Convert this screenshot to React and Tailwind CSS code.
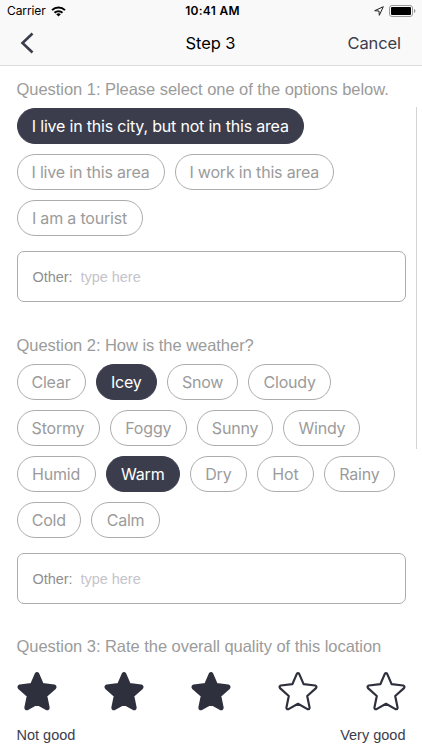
// App.jsx

import React, { useState } from 'react';

const locationOptions = [
  { label: 'I live in this city, but not in this area', width: 'w-[287.5px]' },
  { label: 'I live in this area', width: 'w-[148px]' },
  { label: 'I work in this area', width: 'w-[159px]' },
  { label: 'I am a tourist', width: 'w-[126px]' },
];

const weatherOptions = [
  { label: 'Clear', width: 'w-[69px]' },
  { label: 'Icey', width: 'w-[61px]' },
  { label: 'Snow', width: 'w-[71px]' },
  { label: 'Cloudy', width: 'w-[82.5px]' },
  { label: 'Stormy', width: 'w-[83px]' },
  { label: 'Foggy', width: 'w-[77px]' },
  { label: 'Sunny', width: 'w-[76px]' },
  { label: 'Windy', width: 'w-[77px]' },
  { label: 'Humid', width: 'w-[79px]' },
  { label: 'Warm', width: 'w-[74px]' },
  { label: 'Dry', width: 'w-[56.5px]' },
  { label: 'Hot', width: 'w-[57px]' },
  { label: 'Rainy', width: 'w-[70.5px]' },
  { label: 'Cold', width: 'w-[64.5px]' },
  { label: 'Calm', width: 'w-[68.5px]' },
];

const StatusBar = () => (
  <div className="flex h-[22px] items-center justify-between pl-[7px] pr-[6px] text-black">
    <div className="flex w-[120px] items-center gap-[5px]">
      <span className="text-[12px] tracking-[-0.1px]">Carrier</span>
      <svg width="15" height="11" viewBox="0 0 15 11" fill="none" stroke="currentColor" strokeWidth="2">
        <path d="M1 4.1a9.4 9.4 0 0 1 13 0" />
        <path d="M3.5 6.8a5.8 5.8 0 0 1 8 0" />
        <path d="M7.5 10.6 5.2 8.3a3.4 3.4 0 0 1 4.6 0z" fill="currentColor" stroke="none" />
      </svg>
    </div>
    <span className="pl-[2px] text-[12px] font-semibold tracking-[0.3px]">10:41 AM</span>
    <div className="flex w-[120px] items-center justify-end gap-[5px]">
      <svg width="10" height="10" viewBox="0 0 10 10" fill="none" stroke="#222" strokeWidth="1">
        <path d="M9.3.7.7 4.7l4.3.3.3 4.3z" strokeLinejoin="round" />
      </svg>
      <svg width="27" height="12" viewBox="0 0 27 12">
        <rect x=".5" y=".5" width="23" height="11" rx="2.5" fill="none" stroke="#999" />
        <rect x="2" y="2" width="20" height="8" rx="1" fill="#000" />
        <path d="M25 4v4c.9-.3 1.4-1 1.4-2s-.5-1.7-1.4-2z" fill="#999" />
      </svg>
    </div>
  </div>
);

const Pill = ({ label, width, selected, onClick }) => (
  <button
    type="button"
    onClick={onClick}
    className={`${width} h-9 shrink-0 whitespace-nowrap rounded-full border text-center text-[16px] tracking-[-0.19px] ${
      selected ? 'border-[#3b3d4c] bg-[#3b3d4c] text-white' : 'border-[#acacac] text-[#9b9b9b]'
    }`}
  >
    {label}
  </button>
);

const PillGroup = ({ options, initial }) => {
  const [selected, setSelected] = useState(initial);

  const toggle = (label) => {
    setSelected(selected.includes(label) ? selected.filter((l) => l !== label) : [...selected, label]);
  };

  return (
    <div className="flex flex-wrap gap-x-[10.3px] gap-y-[10px]">
      {options.map((option) => (
        <Pill
          key={option.label}
          {...option}
          selected={selected.includes(option.label)}
          onClick={() => toggle(option.label)}
        />
      ))}
    </div>
  );
};

const Question = ({ children }) => (
  <h2 className="h-6 whitespace-nowrap font-['Liberation_Sans',sans-serif] text-[16.5px] leading-6 tracking-[-0.04px] text-[#9b9b9b]">
    {children}
  </h2>
);

const OtherInput = () => (
  <label className="mt-[15px] flex h-[51px] items-center rounded-[7px] border border-[#acacac] px-[15px] font-['Liberation_Sans',sans-serif] text-[14.5px] tracking-[-0.04px] text-[#8f8f8f]">
    <span className="pt-[3px]">Other:</span>
    <input
      type="text"
      placeholder="type here"
      className="ml-2 min-w-0 flex-1 pt-[3px] outline-none placeholder:text-[#c4c4ca]"
    />
  </label>
);

const Star = ({ filled, onClick }) => (
  <button type="button" onClick={onClick}>
    <svg width="40" height="39" viewBox="0 0 40 39" className="block">
      <path
        d="M18.7 2.1Q20 .2 21.3 2.1L25.6 12.1L37.2 13.5Q39.2 14.3 38 16.1L29.2 24L31.6 35.6Q31.4 37.8 29.5 37.1L20 31.8L10.500 37.1Q8.6 37.8 8.4 35.6L10.800 24L2 16.1Q.8 14.3 2.8 13.5L14.4 12.1Z"
        fill={filled ? '#2f303d' : 'none'}
        stroke="#2f303d"
        strokeWidth="2.2"
        strokeLinejoin="round"
      />
    </svg>
  </button>
);

const App = () => {
  const [rating, setRating] = useState(3);

  return (
    <div className="flex h-[750px] w-[422px] flex-col overflow-hidden bg-white font-['Inter',sans-serif]">
      <header className="h-[66px] shrink-0 border-b border-[#dcdcdc] bg-[#f9f9f9]">
        <StatusBar />
        <div className="flex h-[42px] items-center justify-between pl-5 pr-[21px]">
          <button type="button" aria-label="Back" className="w-[80px] text-[#3b3d4c]">
            <svg width="14" height="22" viewBox="0 0 14 22" fill="none" stroke="currentColor" strokeWidth="2.6">
              <path d="M12.5 1.5 2.5 11l10 9.5" />
            </svg>
          </button>
          <h1 className="text-[16.5px] tracking-[-0.1px] text-black">Step 3</h1>
          <button type="button" className="w-[80px] text-right text-[16.5px] tracking-[-0.1px] text-[#3b3d4c]">
            Cancel
          </button>
        </div>
      </header>

      <main className="flex min-h-0 flex-1 justify-between pl-[16.5px]">
        <div className="w-[389px] shrink-0">
          <section className="pt-[11px]">
            <Question>Question 1: Please select one of the options below.</Question>
            <div className="pt-[7px]">
              <PillGroup options={locationOptions} initial={['I live in this city, but not in this area']} />
            </div>
            <OtherInput />
          </section>

          <section className="pt-[31px]">
            <Question>Question 2: How is the weather?</Question>
            <div className="pt-[7px]">
              <PillGroup options={weatherOptions} initial={['Icey', 'Warm']} />
            </div>
            <OtherInput />
          </section>

          <section className="pt-[30px]">
            <Question>Question 3: Rate the overall quality of this location</Question>
            <div className="flex justify-between pt-[13.5px]">
              {[1, 2, 3, 4, 5].map((n) => (
                <Star key={n} filled={n <= rating} onClick={() => setRating(n)} />
              ))}
            </div>
            <div className="flex justify-between pt-[14.5px] font-['Liberation_Sans',sans-serif] text-[14.5px] leading-5 text-[#3b3d4c]">
              <span>Not good</span>
              <span>Very good</span>
            </div>
          </section>
        </div>
        {/* scroll indicator */}
        <div className="mr-[5px] mt-[41px] h-[342px] w-px bg-[#d4d4d4]" />
      </main>
    </div>
  );
};

export default App;
